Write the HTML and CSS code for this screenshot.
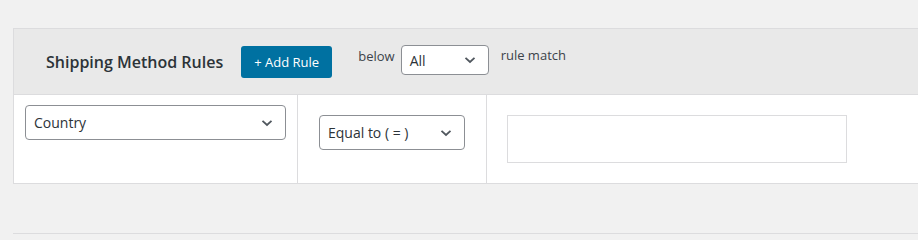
FILE: index.html
```html
<!DOCTYPE html>
<html>
<head>
<meta charset="utf-8">
<link rel="stylesheet" href="styles.css">
</head>
<body>
<div class="page">
  <div class="panel">
    <div class="panel-head">
      <h2 class="title">Shipping Method Rules</h2>
      <button class="btn-primary">+ Add Rule</button>
      <span class="label-below">below</span>
      <div class="select select-all"><span>All</span><svg class="chev" width="12" height="8" viewBox="0 0 12 8"><path d="M1.5 1.8 L6 6 L10.5 1.8" fill="none" stroke="#50575e" stroke-width="1.8"/></svg></div>
      <span class="label-match">rule match</span>
    </div>
    <div class="rule-row">
      <div class="cell cell-field">
        <div class="select select-country"><span>Country</span><svg class="chev" width="12" height="8" viewBox="0 0 12 8"><path d="M1.5 1.8 L6 6 L10.5 1.8" fill="none" stroke="#50575e" stroke-width="1.8"/></svg></div>
      </div>
      <div class="cell cell-op">
        <div class="select select-op"><span>Equal to ( = )</span><svg class="chev" width="12" height="8" viewBox="0 0 12 8"><path d="M1.5 1.8 L6 6 L10.5 1.8" fill="none" stroke="#50575e" stroke-width="1.8"/></svg></div>
      </div>
      <div class="cell cell-value">
        <div class="value-box"></div>
      </div>
    </div>
  </div>
  <div class="footer-line"></div>
</div>
</body>
</html>
```

FILE: styles.css
```css
html, body {
  margin: 0;
  padding: 0;
  background: #f1f1f1;
  font-family: "Open Sans", "Noto Sans", sans-serif;
  color: #2c3338;
  overflow: hidden;
}
.page {
  width: 918px;
  height: 236px;
  padding-top: 28px;
  box-sizing: border-box;
}
.panel {
  margin-left: 13px;
  width: 940px;
  border: 1px solid #dcdcde;
  background: #fff;
}
.panel-head {
  display: flex;
  align-items: flex-start;
  height: 66px;
  background: #e9e9e9;
  border-bottom: 1px solid #dcdcde;
  box-sizing: border-box;
  padding-top: 17px;
}
.title {
  margin: 0 0 0 32px;
  padding-top: 5px;
  font-size: 16px;
  font-weight: 600;
  line-height: 22px;
  color: #2c3338;
}
.btn-primary {
  margin-left: 18px;
  width: 91px;
  height: 32px;
  border: none;
  border-radius: 3px;
  background: #0071a1;
  color: #fff;
  font-family: inherit;
  font-size: 13px;
  padding: 0;
  line-height: 32px;
}
.label-below {
  margin-left: 26px;
  margin-top: -1px;
  font-size: 13px;
  line-height: 22px;
  color: #3c434a;
}
.label-match {
  margin-left: 12px;
  margin-top: -1px;
  font-size: 13px;
  line-height: 20px;
  color: #3c434a;
}
.select {
  display: flex;
  align-items: center;
  justify-content: space-between;
  box-sizing: border-box;
  border: 1px solid #8c8f94;
  border-radius: 4px;
  background: #fff;
  font-size: 14px;
  color: #2c3338;
  padding: 0 12px 0 8px;
}
.select-all {
  margin-left: 6px;
  margin-top: -1px;
  width: 88px;
  height: 30px;
}
.select-country {
  width: 261px;
  height: 35px;
}
.select-op {
  width: 146px;
  height: 35px;
}
.rule-row {
  display: flex;
  height: 88px;
}
.cell {
  box-sizing: border-box;
}
.cell-field {
  width: 284px;
  padding: 10px 0 0 11px;
  border-right: 1px solid #dcdcde;
}
.cell-op {
  width: 189px;
  padding: 20px 0 0 21px;
  border-right: 1px solid #dcdcde;
}
.cell-value {
  flex: 1;
  padding: 20px 0 0 20px;
}
.value-box {
  width: 340px;
  height: 48px;
  box-sizing: border-box;
  border: 1px solid #dcdcde;
}
.footer-line {
  margin-top: 49px;
  margin-left: 13px;
  border-top: 1px solid #dcdcde;
}
```
